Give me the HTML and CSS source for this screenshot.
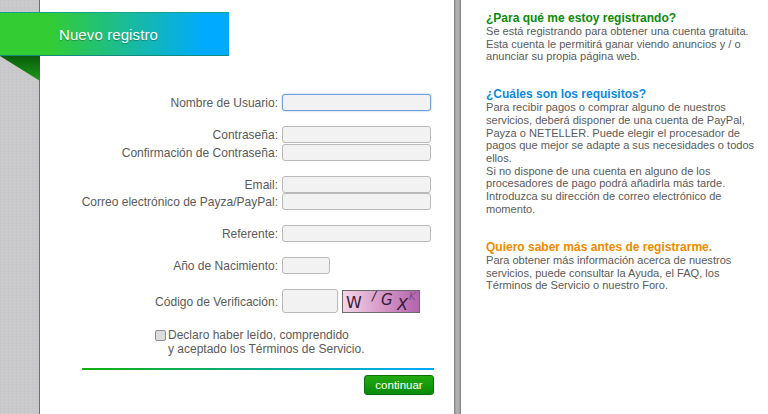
FILE: index.html
```html
<!DOCTYPE html>
<html lang="es">
<head>
  <meta charset="UTF-8" />
  <title>Nuevo registro</title>
  <link rel="stylesheet" href="styles.css">
</head>
<body>
  <div class="side-strip"></div>

  <main class="form-panel">
    <div class="ribbon">
      <span class="ribbon-fold"></span>
      <h1>Nuevo registro</h1>
    </div>

    <form class="reg-form">
      <div class="row row-first">
        <label for="user">Nombre de Usuario:</label>
        <input id="user" class="field field-focus" type="text">
      </div>

      <div class="row gap-big">
        <label for="pass">Contraseña:</label>
        <input id="pass" class="field" type="password">
      </div>
      <div class="row gap-small">
        <label for="pass2">Confirmación de Contraseña:</label>
        <input id="pass2" class="field" type="password">
      </div>

      <div class="row gap-big">
        <label for="email">Email:</label>
        <input id="email" class="field" type="text">
      </div>
      <div class="row gap-tiny">
        <label for="payza">Correo electrónico de Payza/PayPal:</label>
        <input id="payza" class="field" type="text">
      </div>

      <div class="row gap-big">
        <label for="ref">Referente:</label>
        <input id="ref" class="field" type="text">
      </div>

      <div class="row gap-big">
        <label for="year">Año de Nacimiento:</label>
        <input id="year" class="field field-year" type="text">
      </div>

      <div class="row gap-captcha">
        <label for="code" class="label-code">Código de Verificación:</label>
        <input id="code" class="field field-code" type="text">
        <div class="captcha">
          <span class="c1">W</span>
          <span class="c2">/</span>
          <span class="c3">G</span>
          <span class="c4">X</span>
          <span class="c5">K</span>
        </div>
      </div>

      <div class="terms">
        <span class="check"></span>
        <p>Declaro haber leído, comprendido<br>y aceptado los Términos de Servicio.</p>
      </div>

      <div class="rule"></div>
      <div class="actions">
        <button type="button" class="btn-next">continuar</button>
      </div>
    </form>
  </main>

  <div class="divider"></div>

  <aside class="info">
    <h2 class="green">¿Para qué me estoy registrando?</h2>
    <p>Se está registrando para obtener una cuenta gratuita.<br>Esta cuenta le permitirá ganar viendo anuncios y / o<br>anunciar su propia página web.</p>

    <h2 class="blue">¿Cuáles son los requisitos?</h2>
    <p>Para recibir pagos o comprar alguno de nuestros<br>servicios, deberá disponer de una cuenta de PayPal,<br>Payza o NETELLER. Puede elegir el procesador de<br>pagos que mejor se adapte a sus necesidades o todos<br>ellos.<br>Si no dispone de una cuenta en alguno de los<br>procesadores de pago podrá añadirla más tarde.<br>Introduzca su dirección de correo electrónico de<br>momento.</p>

    <h2 class="orange">Quiero saber más antes de registrarme.</h2>
    <p>Para obtener más información acerca de nuestros<br>servicios, puede consultar la Ayuda, el FAQ, los<br>Términos de Servicio o nuestro Foro.</p>
  </aside>
</body>
</html>
```

FILE: styles.css
```css
/* page */
* {
  margin: 0;
  padding: 0;
  box-sizing: border-box;
}
html, body {
  height: 414px;
  overflow: hidden;
  background: #fff;
  font-family: "Liberation Sans", Arial, sans-serif;
  color: #5a5a5a;
}
body {
  display: flex;
}

/* grey strips */
.side-strip {
  width: 40px;
  flex: none;
  background-color: #c9c9cb;
  background-image:
    repeating-linear-gradient(0deg, rgba(255,255,255,0.05) 0 1px, transparent 1px 3px),
    repeating-linear-gradient(90deg, rgba(0,0,0,0.015) 0 1px, transparent 1px 4px);
  border-right: 1px solid #6e6e6e;
}
.divider {
  width: 7px;
  flex: none;
  margin-left: 1px;
  background: linear-gradient(90deg, #7c7c7c, #b0b0b2 30%, #b0b0b2 70%, #7c7c7c);
}

/* left panel */
.form-panel {
  width: 413px;
  flex: none;
  padding-top: 12px;
}
.ribbon {
  position: relative;
  width: 229px;
  height: 44px;
  margin-left: -40px;
  display: flex;
  align-items: center;
  padding-left: 59px;
  background: linear-gradient(90deg, #33cc33 0, #33cc33 50px, #00aaff 205px, #00aaff 100%);
  border-top: 1px solid #10a58a;
  border-bottom: 1px solid #118a80;
}
.ribbon h1 {
  font-size: 15px;
  font-weight: normal;
  color: #fff;
  letter-spacing: 0.1px;
  text-shadow: 0 1px 1px rgba(0,0,0,0.3);
}
.ribbon-fold {
  position: absolute;
  left: 0;
  top: 43px;
  width: 40px;
  height: 25px;
  background: linear-gradient(180deg, #0a5c0a, #1c9a1c);
  clip-path: polygon(0 0, 100% 0, 100% 100%);
}

.reg-form {
  padding-top: 38px;
}
.row {
  display: flex;
  align-items: center;
  height: 17px;
}
.row label {
  width: 238px;
  flex: none;
  margin-right: 4px;
  text-align: right;
  font-size: 12.03px;
  white-space: nowrap;
}
.row .label-code {
  padding-top: 1px;
}
.gap-big { margin-top: 15px; }
.gap-small { margin-top: 1px; }
.gap-tiny { margin-top: 0; }
.gap-captcha { margin-top: 15px; height: 24px; }

.field {
  width: 149px;
  height: 17px;
  background: #f2f2f2;
  border: 1px solid #b9b9b9;
  border-radius: 3px;
  outline: none;
}
.field-focus {
  border-color: #6f9fdc;
  box-shadow: 0 0 2px #8ab4e8;
}
.field-year {
  width: 48px;
}
.field-code {
  width: 56px;
  height: 24px;
}

.captcha {
  position: relative;
  width: 78px;
  height: 23px;
  margin-left: 4px;
  border: 1px solid #6a6a6a;
  background: linear-gradient(90deg, #f4d5e6, #d79ac8 50%, #b264ad);
  font-family: "DejaVu Sans", sans-serif;
  color: #3a1a3a;
  overflow: hidden;
}
.captcha span {
  position: absolute;
}
.c1 { left: 3px; top: 2px; font-size: 16px; }
.c2 { left: 29px; top: -2px; font-size: 12px; font-style: italic; }
.c3 { left: 38px; top: 0; font-size: 15px; font-style: italic; }
.c4 { left: 54px; top: 4px; font-size: 16px; font-style: italic; }
.c5 { left: 66px; top: 0; font-size: 10px; font-style: italic; color: #7a4a80; }

.terms {
  display: flex;
  margin: 15px 0 0 115px;
  font-size: 12px;
  line-height: 14px;
}
.check {
  width: 11px;
  height: 11px;
  margin: 2px 2px 0 0;
  background: #dcdcdc;
  border: 1px solid #8f8f8f;
  border-radius: 2px;
  flex: none;
}
.rule {
  width: 352px;
  height: 2px;
  margin: 12px 0 0 42px;
  background: linear-gradient(90deg, #11b011, #00aaff);
}
.actions {
  display: flex;
  justify-content: flex-end;
  width: 394px;
  margin-top: 5px;
}
.btn-next {
  width: 70px;
  height: 20px;
  background: linear-gradient(180deg, #22aa11, #0a8a0a);
  border: 1px solid #0c6f0c;
  border-radius: 3px;
  color: #fff;
  font-family: "Liberation Sans", Arial, sans-serif;
  font-size: 11.5px;
}

/* right column */
.info {
  padding: 12px 0 0 25px;
  font-size: 11.07px;
  line-height: 12.65px;
  white-space: nowrap;
}
.info h2 {
  font-size: 12px;
  line-height: 13px;
}
.info p {
  margin-bottom: 25.5px;
}
.green { color: #0b8a0b; }
.blue { color: #0a8ae0; }
.orange { color: #f08a00; }
```
